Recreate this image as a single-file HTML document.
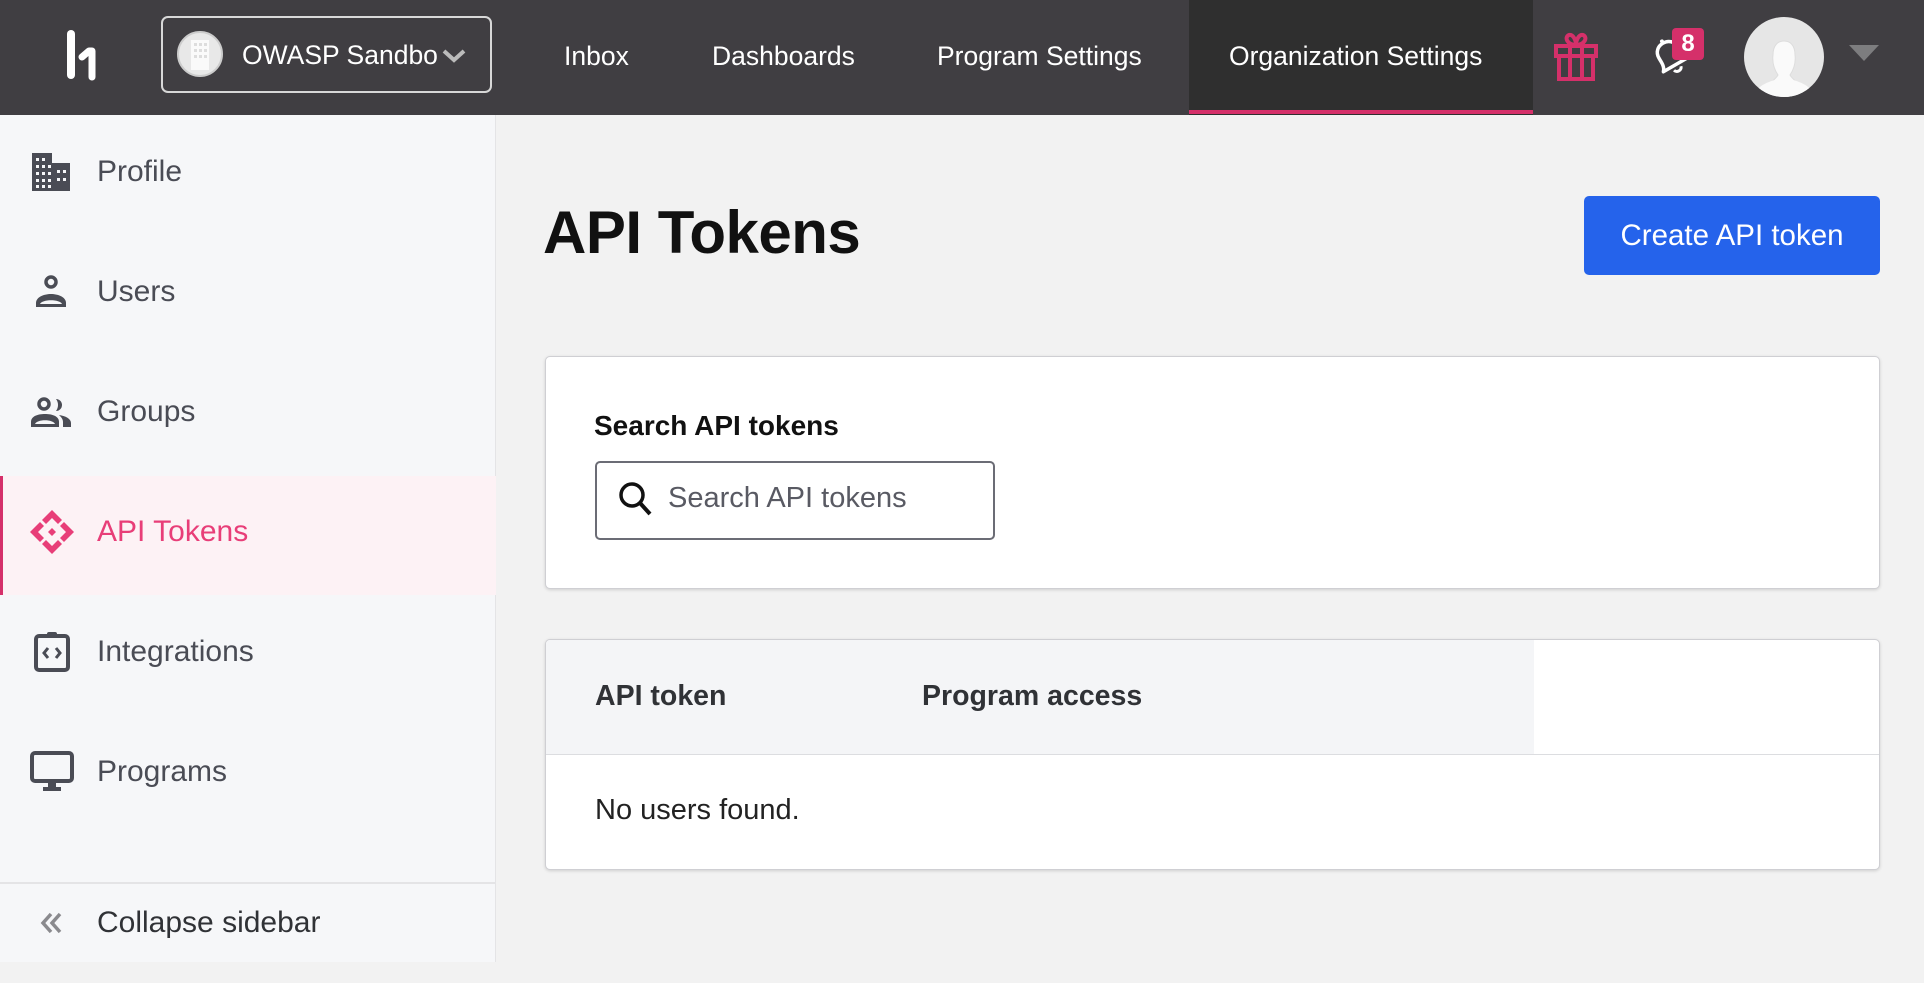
<!DOCTYPE html>
<html><head><meta charset="utf-8"><style>
*{box-sizing:border-box;margin:0;padding:0}
body{width:1924px;height:962px;overflow:hidden;background:#f2f2f2;font-family:"Liberation Sans",sans-serif;position:relative}
.abs{position:absolute}
.hdr{left:0;top:0;width:1924px;height:115px;background:#403e42}
.nav{top:0;height:115px;line-height:112px;color:#fff;font-size:26.5px}
.side{left:0;top:115px;width:496px;height:847px;background:#f6f7f9;border-right:1px solid #e4e4e6}
.item{left:0;width:496px;height:120px;display:flex;align-items:center;font-size:30px;color:#4a4c55}
.item svg{position:absolute;left:30px}
.item span{position:absolute;left:97px}
.card{background:#fff;border:1px solid #cfcfd3;border-radius:5px;box-shadow:0 1px 3px rgba(0,0,0,.15)}
</style></head><body>
<div class="abs hdr"></div>
<!-- logo -->
<div class="abs" style="left:67px;top:30px;width:8px;height:49px;background:#fff;border-radius:4px"></div>
<svg class="abs" style="left:78px;top:46px" width="22" height="36" viewBox="0 0 22 36"><path d="M4 11 L11 5 L14 5 L14 31" stroke="#fff" stroke-width="7" fill="none" stroke-linecap="round" stroke-linejoin="round"/></svg>
<!-- org box -->
<div class="abs" style="left:161px;top:16px;width:331px;height:77px;border:2px solid #d8d8d8;border-radius:7px"></div>
<div class="abs" style="left:177px;top:31px;width:46px;height:46px;border-radius:50%;background:#e8e8e8;border:2px solid #ccc"></div>
<svg class="abs" style="left:191px;top:40px" width="18" height="30" viewBox="0 0 18 30"><rect x="0" y="0" width="18" height="30" fill="#fafafa"/><g fill="#ddd"><rect x="3" y="3" width="3" height="3"/><rect x="8" y="3" width="3" height="3"/><rect x="13" y="3" width="3" height="3"/><rect x="3" y="9" width="3" height="3"/><rect x="8" y="9" width="3" height="3"/><rect x="13" y="9" width="3" height="3"/><rect x="3" y="15" width="3" height="3"/><rect x="8" y="15" width="3" height="3"/><rect x="13" y="15" width="3" height="3"/></g></svg>
<div class="abs nav" style="left:242px;top:0;line-height:110px">OWASP Sandbo</div>
<svg class="abs" style="left:441px;top:48px" width="26" height="16" viewBox="0 0 26 16"><path d="M3 3 L13 12 L23 3" stroke="#bbb" stroke-width="4" fill="none"/></svg>
<div class="abs nav" style="left:564px">Inbox</div>
<div class="abs nav" style="left:712px">Dashboards</div>
<div class="abs nav" style="left:937px">Program Settings</div>
<div class="abs" style="left:1189px;top:0;width:344px;height:115px;background:#2f2f2f"></div>
<div class="abs" style="left:1189px;top:110px;width:344px;height:4px;background:#d5306a"></div>
<div class="abs nav" style="left:1229px">Organization Settings</div>
<!-- gift -->
<svg class="abs" style="left:1553px;top:32px" width="46" height="50" viewBox="0 0 46 50"><g stroke="#d5306a" stroke-width="4" fill="none"><rect x="3" y="14" width="40" height="10"/><rect x="6" y="24" width="34" height="23"/><line x1="17" y1="14" x2="17" y2="47"/><line x1="29" y1="14" x2="29" y2="47"/><path d="M23 13 C14 13 11 5 16 3 C20 2 23 8 23 13 C23 8 26 2 30 3 C35 5 32 13 23 13"/></g></svg>
<!-- bell -->
<svg class="abs" style="left:1648px;top:34px" width="46" height="46" viewBox="0 0 46 46"><g transform="rotate(-30 23 23)"><path d="M9 32 C13 28 12 22 12 18 C12 11 17 7 23 7 C29 7 34 11 34 18 C34 22 33 28 37 32 Z" stroke="#fff" stroke-width="3.5" fill="none" stroke-linejoin="round"/><path d="M19 36 C20 40 26 40 27 36" stroke="#fff" stroke-width="3" fill="none"/><circle cx="23" cy="5" r="2" fill="#fff"/></g></svg>
<div class="abs" style="left:1672px;top:28px;width:32px;height:32px;background:#d5306a;border-radius:4px;color:#fff;font-weight:bold;font-size:24px;text-align:center;line-height:32px">8</div>
<!-- avatar -->
<div class="abs" style="left:1744px;top:17px;width:80px;height:80px;border-radius:50%;background:#e6e6e6;overflow:hidden">
<svg width="80" height="80" viewBox="0 0 80 80"><path d="M26 78 L26 72 C26 64 32 62 34 58 C30 52 28 46 29 38 C29 28 34 24 40 24 C46 24 51 28 51 38 C52 46 50 52 46 58 C48 62 54 64 54 72 L54 78 Z" fill="#fafafa" stroke="#ddd"/><path d="M10 80 C12 70 20 66 34 62 L46 62 C60 66 68 70 70 80Z" fill="#fafafa"/></svg></div>
<svg class="abs" style="left:1848px;top:44px" width="32" height="18" viewBox="0 0 32 18"><path d="M1 1 L31 1 L16 17Z" fill="#7d7d7f"/></svg>

<!-- sidebar -->
<div class="abs side"></div>
<div class="abs item" style="top:112px"><svg width="42" height="38" viewBox="0 0 42 38"><path d="M2 0 H22 V10 H40 V38 H2Z" fill="#4a4c55"/><g fill="#f6f7f9"><rect x="6" y="5" width="3" height="3"/><rect x="12" y="5" width="3" height="3"/><rect x="6" y="12" width="3" height="3"/><rect x="12" y="12" width="3" height="3"/><rect x="18" y="12" width="3" height="3"/><rect x="6" y="19" width="3" height="3"/><rect x="12" y="19" width="3" height="3"/><rect x="18" y="19" width="3" height="3"/><rect x="6" y="26" width="3" height="3"/><rect x="12" y="26" width="3" height="3"/><rect x="18" y="26" width="3" height="3"/><rect x="6" y="32" width="3" height="3"/><rect x="12" y="32" width="3" height="3"/><rect x="18" y="32" width="3" height="3"/><rect x="27" y="17" width="3" height="3"/><rect x="33" y="17" width="3" height="3"/><rect x="27" y="25" width="3" height="3"/><rect x="33" y="25" width="3" height="3"/></g></svg><span>Profile</span></div>
<div class="abs item" style="top:232px"><svg width="42" height="34" viewBox="0 0 42 34" style="left:34px"><circle cx="17" cy="7" r="5" stroke="#4a4c55" stroke-width="3.5" fill="none"/><path d="M2 32 V28 C2 22 10 19 17 19 C24 19 32 22 32 28 V32 Z" fill="#4a4c55"/><path d="M6 29 C8 24 26 24 28 29Z" fill="#f6f7f9"/></svg><span>Users</span></div>
<div class="abs item" style="top:352px"><svg width="42" height="30" viewBox="0 0 42 30"><circle cx="14" cy="7" r="5" stroke="#4a4c55" stroke-width="3.5" fill="none"/><path d="M26 2 A6 6 0 0 1 26 14 A10 10 0 0 0 26 2Z" fill="#4a4c55"/><path d="M1 30 V25 C1 19 8 17 15 17 C22 17 29 19 29 25 V30Z" fill="#4a4c55"/><path d="M5 27 C7 22 23 22 25 27Z" fill="#f6f7f9"/><path d="M29 18 C36 19 41 22 41 26 V30 H33 V25 C33 22 31 20 29 18Z" fill="#4a4c55"/></svg><span>Groups</span></div>
<div class="abs" style="left:0;top:476px;width:496px;height:119px;background:#fdf2f5"></div>
<div class="abs" style="left:0;top:476px;width:3px;height:119px;background:#d5306a"></div>
<div class="abs item" style="top:472px;color:#e83e78"><svg width="44" height="44" viewBox="0 0 44 44"><g fill="#e83e78"><path d="M22 0 L32 10 L28 14 L22 8 L16 14 L12 10Z"/><path d="M22 44 L32 34 L28 30 L22 36 L16 30 L12 34Z"/><path d="M0 22 L10 12 L14 16 L8 22 L14 28 L10 32Z"/><path d="M44 22 L34 12 L30 16 L36 22 L30 28 L34 32Z"/><path d="M22 18 L26 22 L22 26 L18 22Z"/></g></svg><span>API Tokens</span></div>
<div class="abs item" style="top:592px"><svg width="40" height="42" viewBox="0 0 40 42" style="left:33px"><rect x="3" y="5" width="32" height="34" rx="3" stroke="#4a4c55" stroke-width="4" fill="none"/><rect x="14" y="1" width="10" height="6" rx="2" fill="#4a4c55"/><path d="M15 17 L11 22 L15 27 M23 17 L27 22 L23 27" stroke="#4a4c55" stroke-width="3" fill="none"/></svg><span>Integrations</span></div>
<div class="abs item" style="top:712px"><svg width="46" height="42" viewBox="0 0 46 42"><rect x="2" y="2" width="40" height="28" rx="3" stroke="#4a4c55" stroke-width="4" fill="none"/><rect x="18" y="30" width="8" height="6" fill="#4a4c55"/><rect x="13" y="36" width="18" height="4" fill="#4a4c55"/></svg><span>Programs</span></div>
<div class="abs" style="left:0;top:882px;width:496px;height:2px;background:#e4e4e6"></div>
<div class="abs item" style="top:863px;color:#303236"><svg width="28" height="24" viewBox="0 0 28 24" style="left:38px"><path d="M13 3 L5 12 L13 21 M22 3 L14 12 L22 21" stroke="#8a8a8e" stroke-width="3.5" fill="none"/></svg><span>Collapse sidebar</span></div>

<!-- main -->
<div class="abs" style="left:543px;top:198px;font-size:60px;font-weight:bold;color:#111;letter-spacing:-0.5px">API Tokens</div>
<div class="abs" style="left:1584px;top:196px;width:296px;height:79px;background:#2563eb;border-radius:5px;color:#fff;font-size:29.5px;text-align:center;line-height:79px">Create API token</div>

<div class="abs card" style="left:545px;top:356px;width:1335px;height:233px"></div>
<div class="abs" style="left:594px;top:410px;font-size:28px;font-weight:bold;color:#111">Search API tokens</div>
<div class="abs" style="left:595px;top:461px;width:400px;height:79px;border:2px solid #6b6c75;border-radius:5px"></div>
<svg class="abs" style="left:617px;top:480px" width="38" height="40" viewBox="0 0 38 40"><circle cx="15" cy="15" r="11" stroke="#111" stroke-width="3.5" fill="none"/><path d="M23 23 L33 34" stroke="#111" stroke-width="4"/></svg>
<div class="abs" style="left:668px;top:482px;font-size:29px;color:#595a63">Search API tokens</div>

<div class="abs card" style="left:545px;top:639px;width:1335px;height:231px;overflow:hidden">
<div style="position:absolute;left:0;top:0;width:988px;height:114px;background:#f4f5f7"></div>
<div style="position:absolute;left:0;top:114px;width:1335px;height:1px;background:#dcdde0"></div>
<div style="position:absolute;left:49px;top:40px;font-size:28.5px;font-weight:bold;color:#303236">API token</div>
<div style="position:absolute;left:376px;top:40px;font-size:28.5px;font-weight:bold;color:#303236">Program access</div>
<div style="position:absolute;left:49px;top:154px;font-size:29px;color:#222">No users found.</div>
</div>
</body></html>
